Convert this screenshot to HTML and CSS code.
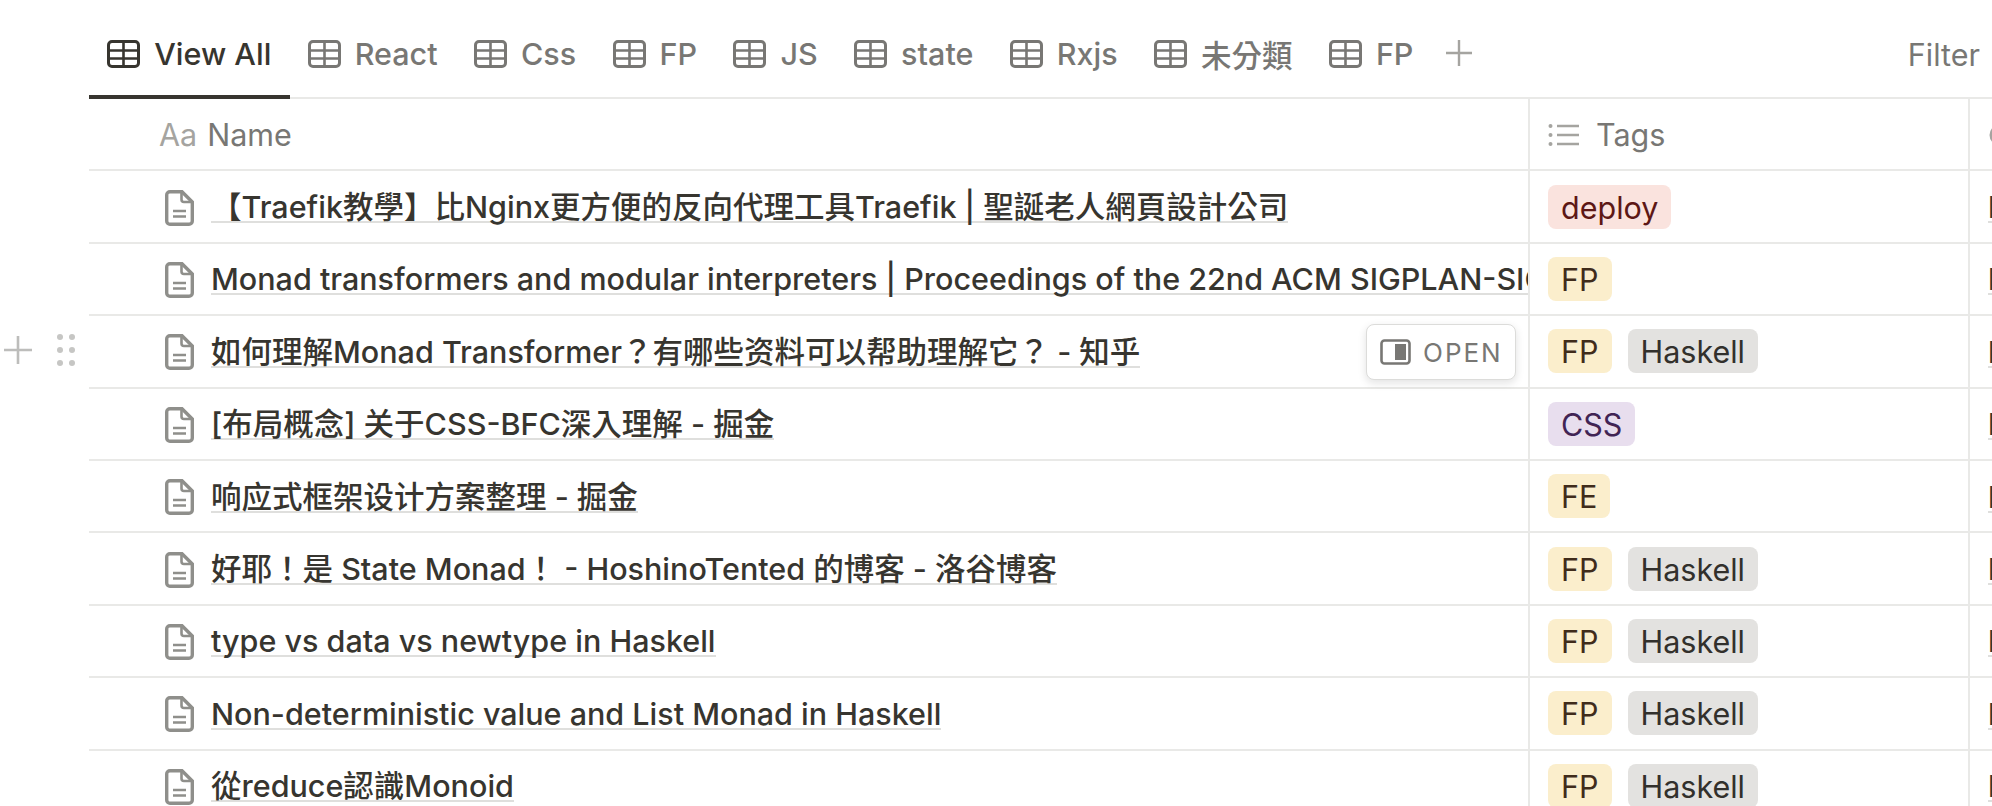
FILE: index.html
```html
<!DOCTYPE html>
<html lang="en">
<head>
    <meta charset="UTF-8">
    <title>Reading List</title>
    <link rel="stylesheet" href="styles.css">
</head>
<body>

<svg class="defs" width="0" height="0">
    <symbol id="table" viewBox="0 0 33 28">
        <rect x="1.5" y="1.5" width="30" height="25" rx="3.5" fill="none" stroke="currentColor" stroke-width="3"/>
        <path d="M2 10.5H31M2 18.5H31M16.5 2V26" fill="none" stroke="currentColor" stroke-width="2.6"/>
    </symbol>
    <symbol id="doc" viewBox="0 0 29 36">
        <path d="M5 1.7H17L27.3 12V31A3.3 3.3 0 0 1 24 34.300H5A3.300 3.300 0 0 1 1.700 31V5A3.300 3.300 0 0 1 5 1.700Z" fill="none" stroke="currentColor" stroke-width="3.400"/>
        <path d="M16.500 2V9.500A2.500 2.500 0 0 0 19 12H27M8 21H21M8 26.500H21" fill="none" stroke="currentColor" stroke-width="2.600"/>
    </symbol>
</svg>

<div class="tabs">
    <div class="tab active"><svg class="tab-icon"><use href="#table"/></svg>View All</div>
    <div class="tab"><svg class="tab-icon"><use href="#table"/></svg>React</div>
    <div class="tab"><svg class="tab-icon"><use href="#table"/></svg>Css</div>
    <div class="tab"><svg class="tab-icon"><use href="#table"/></svg>FP</div>
    <div class="tab"><svg class="tab-icon"><use href="#table"/></svg>JS</div>
    <div class="tab"><svg class="tab-icon"><use href="#table"/></svg>state</div>
    <div class="tab"><svg class="tab-icon"><use href="#table"/></svg>Rxjs</div>
    <div class="tab"><svg class="tab-icon"><use href="#table"/></svg>未分類</div>
    <div class="tab"><svg class="tab-icon"><use href="#table"/></svg>FP</div>
    <svg class="add-view" viewBox="0 0 26 26"><path d="M13 0V26M0 13H26" stroke="currentColor" stroke-width="2.400"/></svg>
    <div class="filter">Filter</div>
</div>

<div class="table">
    <div class="row head">
        <div class="cell name"><span class="aa">Aa</span>Name</div>
        <div class="cell tags">
            <svg class="list-icon" viewBox="0 0 32 24"><path d="M9 3H31M9 12H31M9 21H31" stroke="currentColor" stroke-width="2.400"/><circle cx="2.500" cy="3" r="2"/><circle cx="2.500" cy="12" r="2"/><circle cx="2.500" cy="21" r="2"/></svg>Tags
        </div>
        <div class="cell link"><svg class="link-icon" viewBox="0 0 24 24"><circle cx="12" cy="12" r="9" fill="none" stroke="currentColor" stroke-width="3"/></svg></div>
    </div>

    <div class="row">
        <div class="cell name"><svg class="doc-icon"><use href="#doc"/></svg><span class="title">【Traefik教學】比Nginx更方便的反向代理工具Traefik | 聖誕老人網頁設計公司</span></div>
        <div class="cell tags"><span class="chip red">deploy</span></div>
        <div class="cell link"><span class="title">https://</span></div>
    </div>
    <div class="row">
        <div class="cell name"><svg class="doc-icon"><use href="#doc"/></svg><span class="title">Monad transformers and modular interpreters | Proceedings of the 22nd ACM SIGPLAN-SIGACT symposium</span></div>
        <div class="cell tags"><span class="chip yellow">FP</span></div>
        <div class="cell link"><span class="title">https://</span></div>
    </div>
    <div class="row">
        <div class="row-handle">
            <svg class="add-row" viewBox="0 0 28 28"><path d="M14 0V28M0 14H28" stroke="currentColor" stroke-width="2.600"/></svg>
            <svg class="drag" viewBox="0 0 18 32"><circle cx="3" cy="3" r="3"/><circle cx="15" cy="3" r="3"/><circle cx="3" cy="16" r="3"/><circle cx="15" cy="16" r="3"/><circle cx="3" cy="29" r="3"/><circle cx="15" cy="29" r="3"/></svg>
        </div>
        <div class="cell name"><svg class="doc-icon"><use href="#doc"/></svg><span class="title">如何理解Monad Transformer？有哪些资料可以帮助理解它？ - 知乎</span>
            <div class="open-btn">
                <svg class="open-icon" viewBox="0 0 31 26"><rect x="1.500" y="1.500" width="28" height="23" rx="3" fill="none" stroke="currentColor" stroke-width="2.600"/><rect x="15" y="5" width="11" height="16" fill="currentColor"/></svg>OPEN
            </div>
        </div>
        <div class="cell tags"><span class="chip yellow">FP</span><span class="chip gray">Haskell</span></div>
        <div class="cell link"><span class="title">https://</span></div>
    </div>
    <div class="row">
        <div class="cell name"><svg class="doc-icon"><use href="#doc"/></svg><span class="title">[布局概念] 关于CSS-BFC深入理解 - 掘金</span></div>
        <div class="cell tags"><span class="chip purple">CSS</span></div>
        <div class="cell link"><span class="title">https://</span></div>
    </div>
    <div class="row">
        <div class="cell name"><svg class="doc-icon"><use href="#doc"/></svg><span class="title">响应式框架设计方案整理 - 掘金</span></div>
        <div class="cell tags"><span class="chip yellow">FE</span></div>
        <div class="cell link"><span class="title">https://</span></div>
    </div>
    <div class="row">
        <div class="cell name"><svg class="doc-icon"><use href="#doc"/></svg><span class="title">好耶！是 State Monad！ - HoshinoTented 的博客 - 洛谷博客</span></div>
        <div class="cell tags"><span class="chip yellow">FP</span><span class="chip gray">Haskell</span></div>
        <div class="cell link"><span class="title">https://</span></div>
    </div>
    <div class="row">
        <div class="cell name"><svg class="doc-icon"><use href="#doc"/></svg><span class="title">type vs data vs newtype in Haskell</span></div>
        <div class="cell tags"><span class="chip yellow">FP</span><span class="chip gray">Haskell</span></div>
        <div class="cell link"><span class="title">https://</span></div>
    </div>
    <div class="row">
        <div class="cell name"><svg class="doc-icon"><use href="#doc"/></svg><span class="title">Non-deterministic value and List Monad in Haskell</span></div>
        <div class="cell tags"><span class="chip yellow">FP</span><span class="chip gray">Haskell</span></div>
        <div class="cell link"><span class="title">https://</span></div>
    </div>
    <div class="row">
        <div class="cell name"><svg class="doc-icon"><use href="#doc"/></svg><span class="title">從reduce認識Monoid</span></div>
        <div class="cell tags"><span class="chip yellow">FP</span><span class="chip gray">Haskell</span></div>
        <div class="cell link"><span class="title">https://</span></div>
    </div>
</div>

</body>
</html>
```

FILE: styles.css
```css
html, body {
    height: 100%;
    overflow: hidden;
}

body {
    margin: 0;
    background-color: #fff;
    color: #37352f;
    font-family: Inter, "Noto Sans CJK TC", "Liberation Sans", sans-serif;
    font-size: 30.5px;
}

.defs {
    position: absolute;
}

/* View tabs */
.tabs {
    display: flex;
    align-items: stretch;
    height: 99px;
    margin-left: 89px;
    border-bottom: 2px solid #e9e9e7;
    box-sizing: border-box;
    color: #787774;
    font-weight: 500;
}

.tab {
    display: flex;
    align-items: center;
    gap: 14px;
    padding: 12px 18.2px 0;
    margin-bottom: -2px;
    border-bottom: 4px solid transparent;
}

.tab.active {
    color: #37352f;
    border-bottom-color: #37352f;
}

.tab-icon {
    width: 33px;
    height: 28px;
}

.add-view {
    align-self: center;
    width: 26px;
    height: 26px;
    margin: 8px 0 0 14px;
    color: #a5a4a0;
}

.filter {
    align-self: center;
    margin: 12px 12px 0 auto;
    font-weight: 400;
    white-space: nowrap;
}

/* Table */
.table {
    margin-left: 89px;
}

.row {
    position: relative;
    display: flex;
    height: 72.4px;
    border-bottom: 2px solid #e9e9e7;
    box-sizing: border-box;
}

.cell {
    display: flex;
    align-items: center;
    flex: none;
    box-sizing: border-box;
    overflow: hidden;
    white-space: nowrap;
}

.cell.name {
    width: 1441px;
    padding-left: 76px;
    border-right: 2px solid #e9e9e7;
}

.cell.tags {
    width: 440px;
    gap: 16px;
    padding-left: 18px;
    border-right: 2px solid #e9e9e7;
}

.cell.link {
    flex: 1;
    min-width: 0;
    padding-left: 18px;
}

.head .cell {
    padding-top: 1px;
    color: #787774;
}

.head .cell.name {
    padding-left: 70px;
}

.aa {
    margin-right: 10px;
    color: #a5a4a0;
}

.list-icon {
    width: 32px;
    height: 24px;
    color: #a5a4a0;
    fill: #a5a4a0;
}

.link-icon {
    flex: none;
    width: 24px;
    height: 24px;
    color: #a5a4a0;
}

.doc-icon {
    flex: none;
    width: 29px;
    height: 36px;
    margin: 2px 17px 0 0;
    color: #8f8f8b;
}

.title {
    margin-top: 2px;
    font-weight: 500;
    line-height: 29px;
    border-bottom: 2px solid #dfdfdd;
}

/* Tag chips */
.chip {
    height: 44px;
    line-height: 46px;
    padding: 0 13px;
    border-radius: 8px;
}

.chip.red {
    background-color: #fae3de;
    color: #5d1715;
}

.chip.yellow {
    background-color: #fbeecc;
    color: #402c1b;
}

.chip.gray {
    background-color: #e3e2e0;
    color: #32302c;
}

.chip.purple {
    background-color: #e8deee;
    color: #412454;
}

/* Hover controls on the third row */
.row-handle {
    position: absolute;
    left: -85px;
    top: 18px;
    display: flex;
    align-items: center;
    gap: 25px;
    color: #bdbdbb;
}

.add-row {
    width: 28px;
    height: 28px;
}

.drag {
    width: 18px;
    height: 32px;
    fill: #c6c6c4;
}

.open-btn {
    position: absolute;
    left: 1277px;
    top: 8px;
    display: flex;
    align-items: center;
    gap: 12px;
    width: 150px;
    height: 56px;
    padding-left: 13px;
    box-sizing: border-box;
    background-color: #fff;
    border: 1px solid #dcdcda;
    border-radius: 8px;
    box-shadow: 0 3px 8px rgba(15, 15, 15, 0.12);
    color: #787774;
    font-size: 26px;
    font-weight: 400;
    letter-spacing: 2px;
}

.open-icon {
    width: 31px;
    height: 26px;
}
```
